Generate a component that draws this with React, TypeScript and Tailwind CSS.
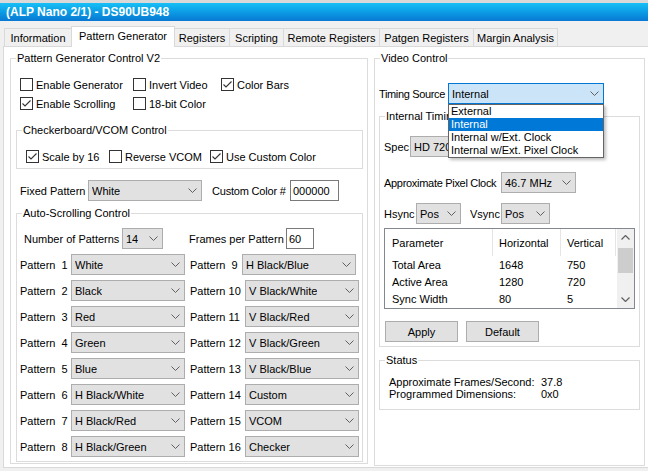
import React from 'react'

function Chevron() {
    return (
        <svg width="9" height="5" viewBox="0 0 9 5" className="shrink-0">
            <path d="M0.5 0.5 L4.5 4.5 L8.5 0.5" fill="none" stroke="#606060" strokeWidth="1" />
        </svg>
    )
}

function Combo({ value, className = '' }: { value: string; className?: string }) {
    return (
        <div className={`flex h-[21px] shrink-0 items-center justify-between border border-[#adadad] bg-[#e1e1e1] pl-[3px] pr-[4px] ${className}`}>
            <span className="whitespace-nowrap overflow-hidden">{value}</span>
            <Chevron />
        </div>
    )
}

function TextBox({ value, className = '' }: { value: string; className?: string }) {
    return (
        <div className={`flex h-[21px] shrink-0 items-center border border-[#7a7a7a] bg-white pl-[2px] ${className}`}>
            {value}
        </div>
    )
}

function Check({ checked, label, className = '' }: { checked?: boolean; label: string; className?: string }) {
    return (
        <div className={`flex h-[19px] shrink-0 items-center gap-[3px] ${className}`}>
            <span className="flex h-[13px] w-[13px] items-center justify-center border border-[#333] bg-white">
                {checked && (
                    <svg width="11" height="11" viewBox="0 0 11 11">
                        <path d="M1.5 5.5 L4 8 L9.5 2.5" fill="none" stroke="#333" strokeWidth="1.1" />
                    </svg>
                )}
            </span>
            <span className="whitespace-nowrap">{label}</span>
        </div>
    )
}

function Group({ title, className = '', children }: { title: string; className?: string; children?: React.ReactNode }) {
    return (
        <fieldset className={`min-w-0 shrink-0 border border-[#dcdcdc] ${className}`}>
            <legend className="ml-[5px] px-[1px] leading-[14px] whitespace-nowrap">{title}</legend>
            {children}
        </fieldset>
    )
}

const tabs = [
    { name: 'Information', w: 'w-[68px]' },
    { name: 'Pattern Generator', w: 'w-[104px]', active: true },
    { name: 'Registers', w: 'w-[56px]' },
    { name: 'Scripting', w: 'w-[55px]' },
    { name: 'Remote Registers', w: 'w-[97px]' },
    { name: 'Patgen Registers', w: 'w-[95px]' },
    { name: 'Margin Analysis', w: 'w-[85px]' },
]

const leftPatterns = ['White', 'Black', 'Red', 'Green', 'Blue', 'H Black/White', 'H Black/Red', 'H Black/Green']
const rightPatterns = ['H Black/Blue', 'V Black/White', 'V Black/Red', 'V Black/Green', 'V Black/Blue', 'Custom', 'VCOM', 'Checker']

export default function App() {
    return (
        <div className="relative h-[471px] w-[648px] overflow-hidden bg-[#f0f0f0] font-['Liberation_Sans',Arial,sans-serif] text-[11px] leading-[14px] text-black">
            <div className="h-[3px] bg-[#d9d9d9]" />
            <div className="flex h-[18px] items-center bg-gradient-to-b from-[#18c0f6] to-[#0a78d3] pl-[6px] text-[12px] font-bold text-white">
                (ALP Nano 2/1) - DS90UB948
            </div>

            {/* ── tabs ── */}
            <div className="mt-[5px] flex h-[20px] items-end pl-[4px]">
                {tabs.map((t, i) => (
                    <div key={t.name}
                        className={`${t.w} ${i > 0 ? '-ml-px' : ''} flex shrink-0 justify-center border border-b-0 border-[#d9d9d9] whitespace-nowrap ${t.active ? 'relative z-10 -mb-px h-[21px] items-start bg-white pt-[2px]' : 'h-[18px] items-center bg-[#f0f0f0]'}`}>
                        {t.name}
                    </div>
                ))}
            </div>

            {/* ── tab panel ── */}
            <div className="ml-[3px] flex h-[422px] w-[700px] gap-[6px] border border-[#d9d9d9] bg-white pl-[6px] pt-[4px]">
                {/* left */}
                <Group title="Pattern Generator Control V2" className="h-[413px] w-[358px]">
                    <div className="pl-[5px] pr-[4px]">
                        <div className="ml-[4px] mt-[10px] flex">
                            <Check label="Enable Generator" className="w-[113px]" />
                            <Check label="Invert Video" className="w-[88px]" />
                            <Check label="Color Bars" checked />
                        </div>
                        <div className="ml-[4px] flex">
                            <Check label="Enable Scrolling" checked className="w-[113px]" />
                            <Check label="18-bit Color" />
                        </div>

                        <Group title="Checkerboard/VCOM Control" className="mt-[10px] h-[46px] w-[347px]">
                            <div className="mt-[10px] flex pl-[9px]">
                                <Check label="Scale by 16" checked className="w-[83px]" />
                                <Check label="Reverse VCOM" className="w-[101px]" />
                                <Check label="Use Custom Color" checked />
                            </div>
                        </Group>

                        <div className="ml-[4px] mt-[11px] flex h-[21px] items-center">
                            <span className="w-[68px] shrink-0">Fixed Pattern</span>
                            <Combo value="White" className="w-[114px]" />
                            <span className="ml-[10px] w-[78px] shrink-0 whitespace-nowrap tracking-[-0.2px]">Custom Color #</span>
                            <TextBox value="000000" className="w-[49px]" />
                        </div>

                        <Group title="Auto-Scrolling Control" className="mt-[5px] h-[256px] w-[347px]">
                            <div className="pl-[3px]">
                                <div className="ml-[4px] mt-[8px] flex h-[21px] items-center">
                                    <span className="w-[98px] shrink-0 whitespace-nowrap">Number of Patterns</span>
                                    <Combo value="14" className="w-[41px]" />
                                    <span className="ml-[26px] w-[97px] shrink-0 whitespace-nowrap">Frames per Pattern</span>
                                    <TextBox value="60" className="w-[28px]" />
                                </div>
                                <div className="mt-[5px] flex flex-col gap-[5px]">
                                    {leftPatterns.map((p, i) => (
                                        <div key={p} className="flex h-[21px] items-center">
                                            <span className="w-[51px] shrink-0 whitespace-pre">{`Pattern  ${i + 1}`}</span>
                                            <Combo value={p} className="w-[114px]" />
                                            <span className={`ml-[5px] shrink-0 whitespace-pre ${i === 0 ? 'w-[52px]' : 'w-[55px]'}`}>
                                                {i === 0 ? 'Pattern  9' : `Pattern ${i + 9}`}
                                            </span>
                                            <Combo value={rightPatterns[i]} className="w-[114px]" />
                                        </div>
                                    ))}
                                </div>
                            </div>
                        </Group>
                    </div>
                </Group>

                {/* right */}
                <Group title="Video Control" className="h-[415px] w-[271px]">
                    <div className="pl-[4px] pr-[3px]">
                        <div className="mt-[18px] flex h-[21px] items-center">
                            <span className="w-[69px] shrink-0 whitespace-nowrap tracking-[-0.35px]">Timing Source</span>
                            <div className="relative">
                                <div className="flex h-[21px] w-[156px] items-center justify-between border border-[#0078d7] bg-[#cce4f7] pl-[3px] pr-[4px]">
                                    <span>Internal</span>
                                    <Chevron />
                                </div>
                                <div className="absolute left-0 top-[21px] z-20 w-[156px] border border-[#646464] bg-white shadow-[2px_2px_3px_rgba(0,0,0,0.25)]">
                                    {['External', 'Internal', 'Internal w/Ext. Clock', 'Internal w/Ext. Pixel Clock'].map(o => (
                                        <div key={o} className={`h-[13px] whitespace-nowrap pl-[2px] leading-[13px] ${o === 'Internal' ? 'bg-[#0078d7] text-white' : ''}`}>{o}</div>
                                    ))}
                                </div>
                            </div>
                        </div>

                        <Group title="Internal Timing" className="mt-[5px] h-[238px] w-[261px]">
                            <div className="px-[4px]">
                                <div className="mt-[13px] flex h-[21px] items-center">
                                    <span className="w-[26px] shrink-0">Spec</span>
                                    <Combo value="HD 720p 60Hz" className="w-[190px]" />
                                </div>
                                <div className="mt-[15px] flex h-[21px] items-center">
                                    <span className="w-[117px] shrink-0 whitespace-nowrap tracking-[-0.3px]">Approximate Pixel Clock</span>
                                    <Combo value="46.7 MHz" className="w-[75px]" />
                                </div>
                                <div className="mt-[10px] flex h-[21px] items-center">
                                    <span className="w-[32px] shrink-0">Hsync</span>
                                    <Combo value="Pos" className="w-[45px]" />
                                    <span className="ml-[9px] w-[31px] shrink-0">Vsync</span>
                                    <Combo value="Pos" className="w-[49px]" />
                                </div>

                                {/* list view */}
                                <div className="mt-[4px] flex h-[81px] w-[251px] border border-[#828790] bg-white">
                                    <div className="flex-1">
                                        <div className="flex h-[27px]">
                                            <div className="flex w-[108px] items-center border-r border-[#e5e5e5] pl-[7px]">Parameter</div>
                                            <div className="flex w-[68px] items-center border-r border-[#e5e5e5] pl-[6px]">Horizontal</div>
                                            <div className="flex w-[55px] items-center border-r border-[#e5e5e5] pl-[6px]">Vertical</div>
                                        </div>
                                        {[['Total Area', '1648', '750'], ['Active Area', '1280', '720'], ['Sync Width', '80', '5']].map(r => (
                                            <div key={r[0]} className="flex h-[17px] items-center">
                                                <span className="w-[108px] pl-[7px]">{r[0]}</span>
                                                <span className="w-[68px] pl-[6px]">{r[1]}</span>
                                                <span className="w-[55px] pl-[6px]">{r[2]}</span>
                                            </div>
                                        ))}
                                    </div>
                                    <div className="flex w-[17px] flex-col bg-[#f0f0f0]">
                                        <div className="flex h-[17px] items-center justify-center">
                                            <svg width="9" height="5" viewBox="0 0 9 5"><path d="M0.5 4.5 L4.5 0.5 L8.5 4.5" fill="none" stroke="#606060" strokeWidth="1.2" /></svg>
                                        </div>
                                        <div className="mx-[1px] mt-[2px] h-[25px] bg-[#cdcdcd]" />
                                        <div className="flex-1" />
                                        <div className="flex h-[17px] items-center justify-center">
                                            <svg width="9" height="5" viewBox="0 0 9 5"><path d="M0.5 0.5 L4.5 4.5 L8.5 0.5" fill="none" stroke="#606060" strokeWidth="1.2" /></svg>
                                        </div>
                                    </div>
                                </div>

                                <div className="ml-[1px] mt-[12px] flex gap-[8px]">
                                    <button className="flex h-[21px] w-[73px] items-center justify-center border border-[#adadad] bg-[#e1e1e1]">Apply</button>
                                    <button className="flex h-[21px] w-[73px] items-center justify-center border border-[#adadad] bg-[#e1e1e1]">Default</button>
                                </div>
                            </div>
                        </Group>

                        <Group title="Status" className="mt-[6px] h-[57px] w-[261px]">
                            <div className="mt-[9px] pl-[9px] leading-[12px]">
                                <div className="flex"><span className="w-[152px]">Approximate Frames/Second:</span><span>37.8</span></div>
                                <div className="flex"><span className="w-[152px]">Programmed Dimensions:</span><span>0x0</span></div>
                            </div>
                        </Group>
                    </div>
                </Group>
            </div>
        </div>
    )
}
